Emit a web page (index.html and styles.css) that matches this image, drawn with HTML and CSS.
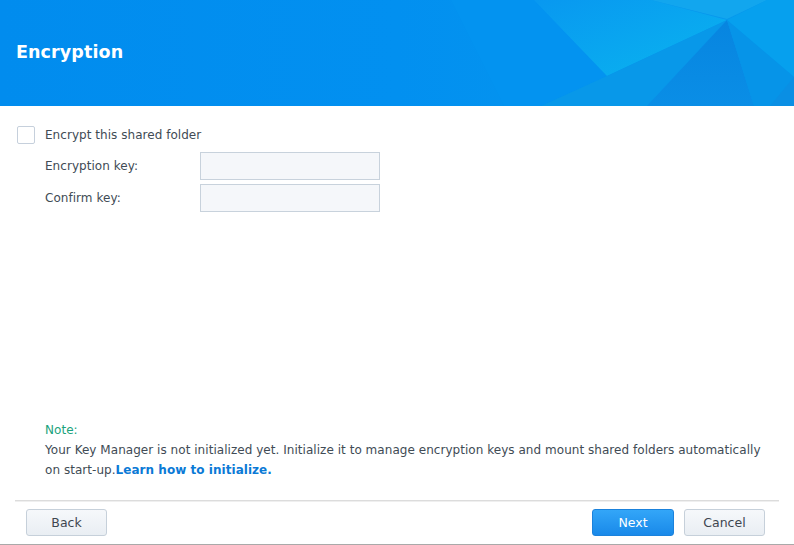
FILE: index.html
```html
<!DOCTYPE html>
<html>
<head>
<meta charset="utf-8">
<link rel="stylesheet" href="styles.css">
</head>
<body>
<div class="window">
  <header class="banner">
    <svg class="banner-bg" width="794" height="106" viewBox="0 0 794 106" preserveAspectRatio="none">
      <defs>
        <linearGradient id="g0" x1="0" y1="0" x2="1" y2="0">
          <stop offset="0" stop-color="#018cee"/>
          <stop offset="0.5" stop-color="#0290f0"/>
          <stop offset="1" stop-color="#0898ec"/>
        </linearGradient>
        <linearGradient id="g1" x1="0" y1="0" x2="1" y2="1">
          <stop offset="0" stop-color="#0898f0"/>
          <stop offset="1" stop-color="#0ab4ef"/>
        </linearGradient>
        <linearGradient id="g2" x1="0" y1="0" x2="0" y2="1">
          <stop offset="0" stop-color="#0785e0"/>
          <stop offset="1" stop-color="#0a8ee6"/>
        </linearGradient>
      </defs>
      <rect width="794" height="106" fill="url(#g0)"/>
      <polygon points="451,0 534,0 607,76 541,106 504,106" fill="#0393f0"/>
      <polygon points="534,0 651,0 727,20 607,76" fill="url(#g1)"/>
      <polygon points="651,0 767,0 727,19" fill="#12a6ee"/>
      <polygon points="767,0 794,0 794,77 727,20" fill="#06a0ee"/>
      <polygon points="607,76 727,20 647,106 541,106" fill="#0898e9"/>
      <polygon points="727,20 754,106 647,106" fill="url(#g2)"/>
      <polygon points="727,20 794,77 794,106 754,106" fill="#0694e8"/>
      <polygon points="794,77 794,106 770,106" fill="#0a8fe4"/>
    </svg>
    <h1 class="title">Encryption</h1>
  </header>

  <main class="content">
    <div class="check-row">
      <span class="checkbox"></span>
      <span class="check-label">Encrypt this shared folder</span>
    </div>
    <div class="fields">
      <div class="field">
        <label class="field-label">Encryption key:</label>
        <input class="field-input" type="password">
      </div>
      <div class="field">
        <label class="field-label">Confirm key:</label>
        <input class="field-input" type="password">
      </div>
    </div>

    <div class="note">
      <div class="note-title">Note:</div>
      <p class="note-text"><span>Your Key Manager is not initialized yet. Initialize it to manage encryption keys and mount shared folders automatically on start-up.</span><a class="note-link" href="#">Learn how to initialize.</a></p>
    </div>
  </main>

  <footer class="footer">
    <button class="btn">Back</button>
    <div class="footer-right">
      <button class="btn btn-primary">Next</button>
      <button class="btn">Cancel</button>
    </div>
  </footer>
  <div class="bottom-edge"></div>
</div>
</body>
</html>
```

FILE: styles.css
```css
* { box-sizing: border-box; }
html, body {
  margin: 0;
  padding: 0;
  background: #ffffff;
}
body {
  font-family: "DejaVu Sans", Verdana, sans-serif;
  font-size: 12px;
  letter-spacing: 0.04px;
  color: #414b55;
}
.window {
  width: 794px;
  height: 545px;
  display: flex;
  flex-direction: column;
  overflow: hidden;
}
.banner {
  position: relative;
  height: 106px;
  flex: none;
  display: flex;
  align-items: center;
  padding-left: 16px;
}
.banner-bg {
  position: absolute;
  left: 0;
  top: 0;
}
.title {
  position: relative;
  margin: 0 0 2px 0;
  font-size: 17.5px;
  font-weight: bold;
  color: #ffffff;
  letter-spacing: 0.1px;
}
.content {
  flex: 1;
  display: flex;
  flex-direction: column;
  padding: 20px 20px 20px 17px;
}
.check-row {
  display: flex;
  align-items: center;
  height: 18px;
}
.checkbox {
  width: 18px;
  height: 18px;
  border: 1px solid #c6d0dc;
  border-radius: 2px;
  background: #ffffff;
  flex: none;
}
.check-label {
  margin-left: 10px;
}
.fields {
  display: flex;
  flex-direction: column;
  gap: 4px;
  margin-top: 8px;
  padding-left: 28px;
}
.field {
  display: flex;
  align-items: center;
}
.field-label {
  width: 155px;
  flex: none;
}
.field-input {
  width: 180px;
  height: 28px;
  border: 1px solid #c8d2dc;
  background: #f5f7fa;
  border-radius: 0;
  margin: 0;
  padding: 0 6px;
  outline: none;
}
.note {
  margin-top: auto;
  padding-left: 28px;
  line-height: 20px;
}
.note-title {
  color: #1ba37c;
}
.note-text {
  margin: 0;
}
.note-link {
  color: #0b7ad6;
  font-weight: bold;
  text-decoration: none;
}
.footer {
  flex: none;
  margin: 0 15px;
  border-top: 1px solid #dcdcdc;
  box-shadow: inset 0 1px 0 #efefef;
  padding: 8px 14px 8px 11px;
  display: flex;
  justify-content: space-between;
  align-items: center;
}
.footer-right {
  display: flex;
  gap: 10px;
}
.btn {
  font-family: "DejaVu Sans", Verdana, sans-serif;
  font-size: 12.5px;
  color: #3e4650;
  width: 81px;
  height: 27px;
  border: 1px solid #c6d0da;
  border-radius: 3px;
  background: linear-gradient(#f6f8fb, #e9eef3);
  padding: 0;
  margin: 0;
}
.btn-primary {
  width: 82px;
  color: #ffffff;
  border-color: #1b82dc;
  background: linear-gradient(#33a6f8, #1989e9);
}
.bottom-edge {
  flex: none;
  height: 1px;
  background: #a9a9a9;
}
```
